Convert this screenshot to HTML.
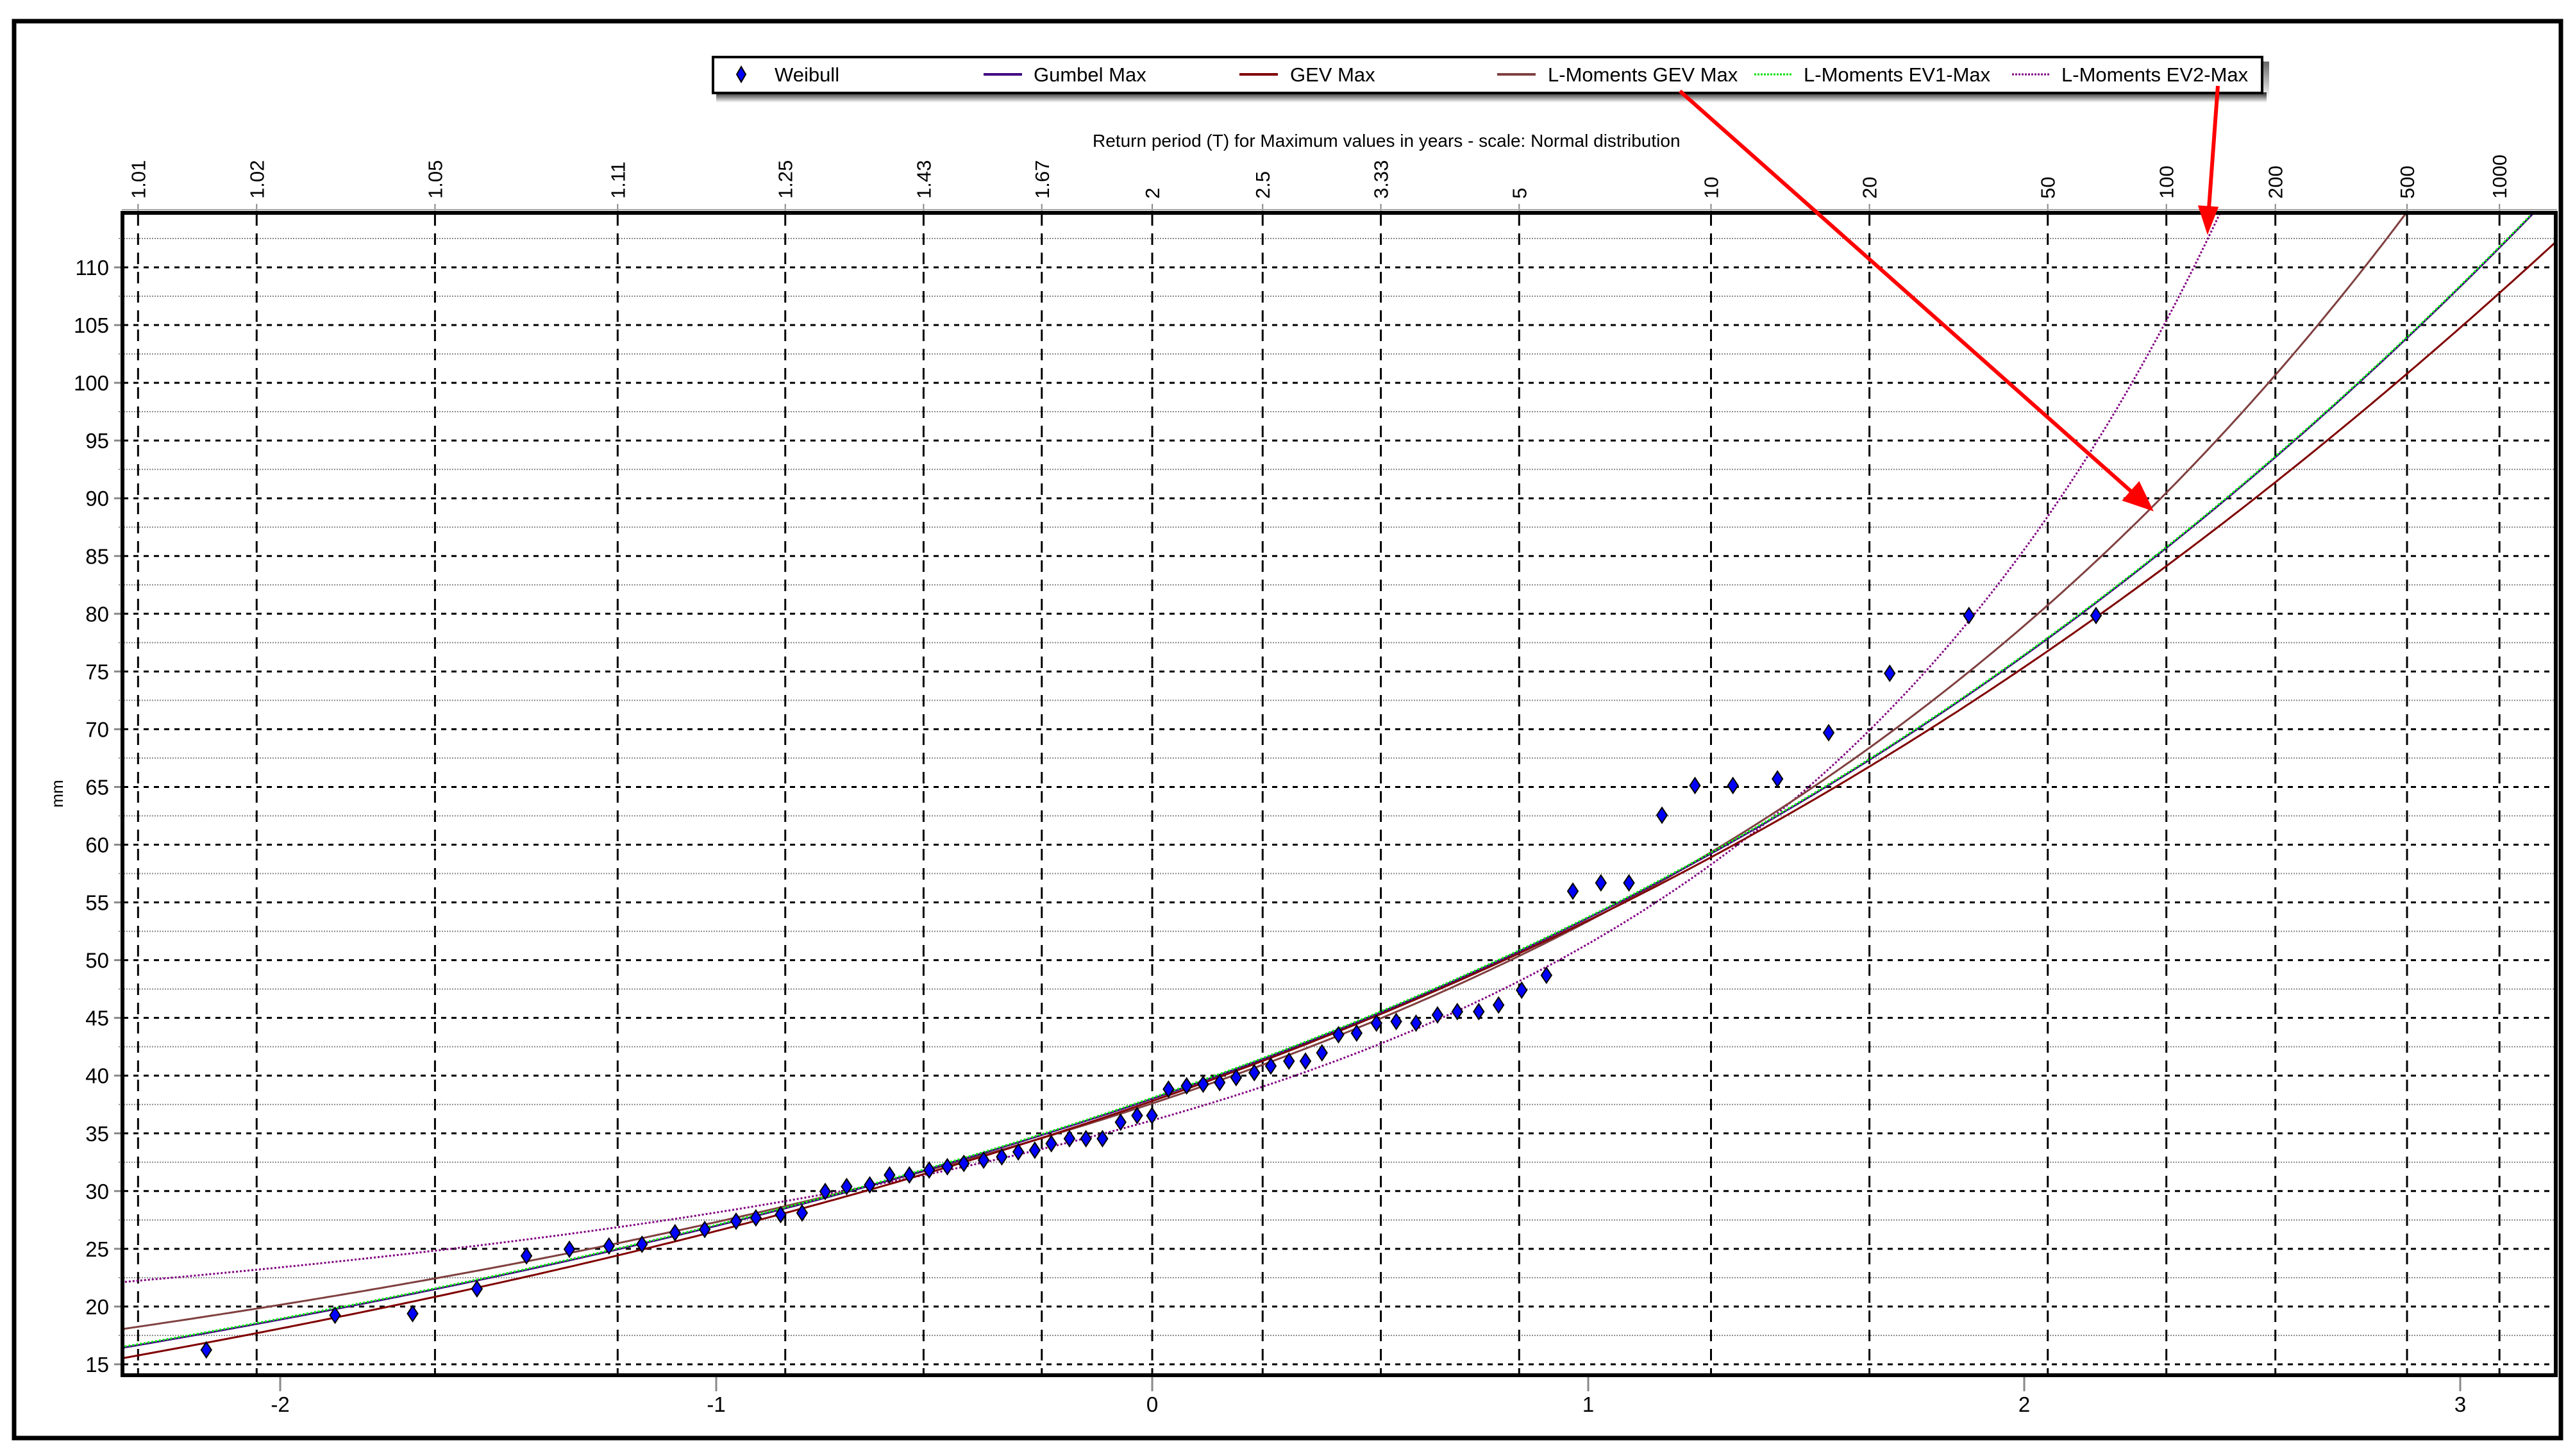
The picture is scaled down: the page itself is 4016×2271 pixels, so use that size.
<!DOCTYPE html>
<html><head><meta charset="utf-8"><style>
html,body{margin:0;padding:0;background:#fff;width:4016px;height:2271px;overflow:hidden}
svg{display:block}
text{font-family:"Liberation Sans",Arial,sans-serif;fill:#000}
</style></head><body>
<svg id="s" width="4016" height="2271" viewBox="0 0 4016 2271" xmlns="http://www.w3.org/2000/svg">
<defs>
<clipPath id="pc"><rect x="192" y="334" width="3794" height="1810"/></clipPath>
<linearGradient id="sh" x1="0" y1="0" x2="0" y2="1"><stop offset="0" stop-color="#000"/><stop offset="1" stop-color="#000" stop-opacity="0"/></linearGradient>
</defs>
<rect x="0" y="0" width="4016" height="2271" fill="#fff"/>
<rect x="22" y="33" width="3972" height="2210" fill="none" stroke="#000" stroke-width="7"/>
<g id="grid"></g>
<g id="curves" clip-path="url(#pc)"></g>
<g id="pts"></g>
<rect x="191" y="332" width="3795" height="1813" fill="none" stroke="#000" stroke-width="6"/>
<line x1="190" y1="327" x2="3988" y2="327" stroke="#aaa" stroke-width="2"/>
<g id="labels" font-size="33"></g>
<text x="1704" y="229" font-size="28">Return period (T) for Maximum values in years - scale: Normal distribution</text>
<text transform="translate(98,1238) rotate(-90)" text-anchor="middle" font-size="26">mm</text>
<!-- legend -->
<rect x="1117" y="144" width="2418" height="16" fill="url(#sh)" opacity="0.85"/>
<rect x="3527" y="96" width="12" height="58" fill="url(#sh)" opacity="0.6"/>
<rect x="1112" y="89" width="2416" height="56" fill="#fff" stroke="#000" stroke-width="4"/>
<g font-size="31">
<path d="M1156 104 L1163 116 L1156 128 L1149 116 Z" fill="#0000ff" stroke="#000" stroke-width="2"/>
<text x="1208" y="127">Weibull</text>
<line x1="1534" y1="116" x2="1594" y2="116" stroke="#400080" stroke-width="4"/>
<text x="1612" y="127">Gumbel Max</text>
<line x1="1933" y1="116" x2="1993" y2="116" stroke="#800000" stroke-width="4"/>
<text x="2012" y="127">GEV Max</text>
<line x1="2335" y1="116" x2="2395" y2="116" stroke="#804040" stroke-width="4"/>
<text x="2414" y="127">L-Moments GEV Max</text>
<line x1="2736" y1="116" x2="2796" y2="116" stroke="#00e000" stroke-width="3" stroke-dasharray="3 2"/>
<text x="2813" y="127">L-Moments EV1-Max</text>
<line x1="3138" y1="116" x2="3198" y2="116" stroke="#800080" stroke-width="3" stroke-dasharray="3 2"/>
<text x="3215" y="127">L-Moments EV2-Max</text>
</g>
<!-- arrows -->
<line x1="2620" y1="142" x2="3330" y2="772" stroke="#f00" stroke-width="6"/>
<path d="M3356 795 L3312 780 L3336 753 Z" fill="#f00" stroke="#f00" stroke-width="3"/>
<line x1="3459" y1="134" x2="3445" y2="325" stroke="#f00" stroke-width="6"/>
<path d="M3443 362 L3430 322 L3458 324 Z" fill="#f00" stroke="#f00" stroke-width="3"/>
</svg>
<script>
(function(){
var NS="http://www.w3.org/2000/svg";
function el(p,t,a){var e=document.createElementNS(NS,t);for(var k in a)e.setAttribute(k,a[k]);p.appendChild(e);return e;}
function X(z){return 1797+680*z;}
function Y(v){return 417+(110-v)*18.01;}
var g=document.getElementById('grid'),lb=document.getElementById('labels');
// horizontal grid
for(var v=15;v<=110;v+=5){
 el(g,'line',{x1:192,y1:Y(v),x2:3986,y2:Y(v),stroke:'#000','stroke-width':3,'stroke-dasharray':'8 8'});
 el(g,'line',{x1:178,y1:Y(v),x2:192,y2:Y(v),stroke:'#888','stroke-width':3});
 var t=el(lb,'text',{x:170,y:Y(v)+12,'text-anchor':'end'});t.textContent=v;
}
for(var v=17.5;v<=112.5;v+=5){
 el(g,'line',{x1:185,y1:Y(v),x2:3986,y2:Y(v),stroke:'#888','stroke-width':2,'stroke-dasharray':'2 2'});
}
// verticals
var T=[["1.01",-2.326],["1.02",-2.054],["1.05",-1.645],["1.11",-1.226],["1.25",-0.8416],["1.43",-0.5244],["1.67",-0.2533],["2",0],["2.5",0.2533],["3.33",0.5244],["5",0.8416],["10",1.2816],["20",1.645],["50",2.054],["100",2.326],["200",2.576],["500",2.878],["1000",3.09]];
T.forEach(function(a){var x=X(a[1]);
 el(g,'line',{x1:x,y1:334,x2:x,y2:2143,stroke:'#000','stroke-width':3,'stroke-dasharray':'18 12'});
 el(g,'line',{x1:x,y1:318,x2:x,y2:332,stroke:'#888','stroke-width':2});
 var t=el(lb,'text',{transform:'translate('+(x+11)+',310) rotate(-90)','font-size':31});t.textContent=a[0];
});
for(var z=-2;z<=3;z++){var x=X(z);
 el(g,'line',{x1:x,y1:2147,x2:x,y2:2170,stroke:'#888','stroke-width':3});
 var t=el(lb,'text',{x:x,y:2202,'text-anchor':'middle'});t.textContent=z;
}
// curves
function Phi(z){var s=z<0?-1:1,x=Math.abs(z)/Math.SQRT2;var t=1/(1+0.3275911*x);
 var y=1-(((((1.061405429*t-1.453152027)*t)+1.421413741)*t-0.284496736)*t+0.254829592)*t*Math.exp(-x*x);return 0.5*(1+s*y);}
function sv(z){var p=Phi(z);return Math.log(-Math.log(p));}
var cv=document.getElementById('curves');
function curve(f,col,dash){var d='';for(var z=-2.4;z<=3.3;z+=0.01){var v=f(z);d+=(d?'L':'M')+X(z).toFixed(1)+' '+Y(v).toFixed(1);}
 var a={d:d,fill:'none',stroke:col,'stroke-width':3};if(dash)a['stroke-dasharray']=dash;el(cv,'path',a);}
function gev(u,b,k){return function(z){var s=sv(z);return u+b*(1-Math.exp(k*s))/k;};}
curve(function(z){return -0.7+33.6*Math.exp(-0.25*sv(z));},'#800080','3 3');
curve(gev(33.66,10.6,-0.065),'#804040');
curve(gev(33.6,11.5,0.02),'#800000');
curve(function(z){return 33.87-11.27*sv(z);},'#400080');
curve(function(z){return 33.95-11.27*sv(z);},'#00ff00','3 3');
// points
var P=[[125,818],[203,797],[250,796],[289,781],[319,761],[345,757],[369,755],[389,754],[409,747],[427,745],[446,740],[458,738],[473,736],[486,735],[500,722],[513,719],[527,718],[539,712],[551,712],[563,709],[574,707],[584,705],[596,703],[607,701],[617,698],[627,697],[637,693],[648,690],[658,690],[668,690],[679,680],[689,676],[698,676],[708,660],[719,658],[729,657],[739,656],[749,653],[760,650],[770,646],[781,643],[791,643],[801,638],[811,627],[822,626],[834,620],[846,619],[858,620],[871,615],[883,613],[896,613],[908,609],[922,600],[937,591],[953,540],[970,535],[987,535],[1007,494],[1027,476],[1050,476],[1077,472],[1108,444],[1145,408],[1193,373],[1270,373]];
var pg=document.getElementById('pts');
P.forEach(function(q){var x=q[0]*2.574,y=q[1]*2.574;
 el(pg,'path',{d:'M'+x+' '+(y-12)+'L'+(x+8)+' '+y+'L'+x+' '+(y+12)+'L'+(x-8)+' '+y+'Z',fill:'#0000ff',stroke:'#000','stroke-width':2});});
})();
</script>
</body></html>
